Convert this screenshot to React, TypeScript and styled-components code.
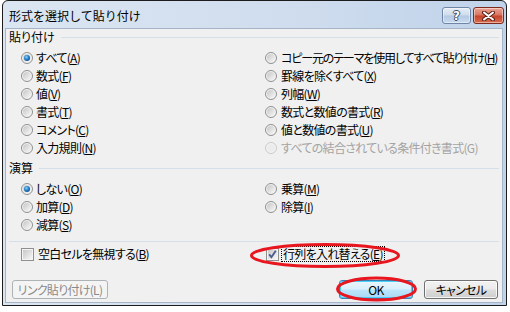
import React from "react";
import styled, { createGlobalStyle } from "styled-components";

const Global = createGlobalStyle`
  html, body { margin: 0; padding: 0; background: #ffffff; }
  body { font-family: "Noto Sans CJK JP", "Noto Sans", sans-serif; }
`;

const Desktop = styled.div`
  position: relative;
  width: 510px;
  height: 312px;
  overflow: hidden;
  background: #ffffff;
`;

const Window = styled.div`
  position: absolute;
  left: 2px;
  top: 0;
  width: 505px;
  height: 306px;
  box-sizing: border-box;
  border: 1px solid #1c1c1c;
  border-radius: 6px 6px 0 0;
  background: linear-gradient(to right, #dbe6f2 0%, #d0ddee 55%, #bfd3ea 100%);
  display: flex;
  flex-direction: column;
`;

const TitleBar = styled.div`
  height: 27px;
  display: flex;
  align-items: flex-start;
  padding: 0 2px 0 6px;
  flex-shrink: 0;
`;

const TitleText = styled.div`
  font-size: 12px;
  line-height: 16px;
  margin-top: 7px;
  color: #000;
  flex: 1;
`;

const CaptionGroup = styled.div`
  display: flex;
  gap: 2px;
  margin-top: 6px;
`;

const CaptionButton = styled.div<{ $kind: "help" | "close" }>`
  width: ${(p) => (p.$kind === "help" ? "29px" : "31px")};
  height: 17px;
  box-sizing: border-box;
  border-radius: 3px;
  display: flex;
  align-items: center;
  justify-content: center;
  border: 1px solid ${(p) => (p.$kind === "help" ? "#6f86a6" : "#7d2a1c")};
  box-shadow: inset 0 0 0 1px rgba(255, 255, 255, 0.45);
  background: ${(p) =>
    p.$kind === "help"
      ? "linear-gradient(#e6edf6 0%, #cfdcec 48%, #b4c9e2 52%, #c9dbef 100%)"
      : "linear-gradient(#eaa595 0%, #d9735f 48%, #c4432b 52%, #d86c4f 100%)"};
`;

const HelpGlyph = styled.span`
  font-family: "DejaVu Sans", sans-serif;
  font-weight: bold;
  font-size: 12px;
  line-height: 12px;
  color: #ffffff;
  text-shadow: 1px 0 0 #3b4d66, -1px 0 0 #3b4d66, 0 1px 0 #3b4d66, 0 -1px 0 #3b4d66;
`;

const Client = styled.div`
  flex: 1;
  margin: 0 3px 2px 2px;
  border: 1px solid #a5b4c6;
  background: #f0f0f0;
  display: flex;
  flex-direction: column;
  padding: 0 3px 0 3px;
  font-size: 12px;
  color: #000;
  font-feature-settings: "palt";
  letter-spacing: -0.7px;
`;

const SectionHeader = styled.div<{ $top: number }>`
  display: flex;
  align-items: center;
  height: 16px;
  margin-top: ${(p) => p.$top}px;
`;

const SectionLabel = styled.span`
  line-height: 16px;
  white-space: nowrap;
  letter-spacing: 0;
`;

const Rule = styled.div<{ $left?: number }>`
  flex: 1;
  height: 1px;
  background: #d5dfe8;
  margin-left: ${(p) => p.$left ?? 0}px;
`;

const Separator = styled.div`
  height: 1px;
  background: #d5dfe8;
  margin-top: 7px;
`;

const Columns = styled.div<{ $top: number }>`
  display: flex;
  padding-left: 12px;
  margin-top: ${(p) => p.$top}px;
`;

const Column = styled.div<{ $width?: number }>`
  display: flex;
  flex-direction: column;
  width: ${(p) => (p.$width ? `${p.$width}px` : "auto")};
  flex: ${(p) => (p.$width ? "none" : "1")};
`;

const OptionRow = styled.div<{ $gap?: number }>`
  display: flex;
  align-items: center;
  height: 18px;
  gap: ${(p) => p.$gap ?? 3}px;
  white-space: nowrap;
`;

const OptionText = styled.span<{ $disabled?: boolean; $tight?: boolean }>`
  line-height: 16px;
  color: ${(p) => (p.$disabled ? "#a3a3a3" : "#000")};
  letter-spacing: ${(p) => (p.$tight ? "-1.15px" : "inherit")};
`;

const Focus = styled.span`
  border: 1px dotted #000;
  padding: 0 1px;
  line-height: 14px;
`;

const Key = styled.u`
  text-decoration-thickness: 1px;
  text-underline-offset: 1px;
`;

const CheckRow = styled.div`
  display: flex;
  padding-left: 12px;
  margin-top: 3px;
`;

const ButtonRow = styled.div`
  display: flex;
  align-items: center;
  margin-top: 17px;
  padding: 0 1px 0 3px;
`;

const RightButtons = styled.div`
  margin-left: auto;
  display: flex;
  gap: 11px;
`;

const Button = styled.div<{ $variant?: "default" | "disabled"; $width: number }>`
  width: ${(p) => p.$width}px;
  height: 19px;
  box-sizing: border-box;
  border-radius: 3px;
  display: flex;
  align-items: center;
  justify-content: center;
  font-size: 12px;
  line-height: 14px;
  font-feature-settings: "palt";
  color: ${(p) => (p.$variant === "disabled" ? "#8a8a8a" : "#000")};
  border: 1px solid
    ${(p) =>
      p.$variant === "disabled" ? "#adb2b5" : p.$variant === "default" ? "#3c7fb1" : "#707070"};
  background: ${(p) =>
    p.$variant === "disabled"
      ? "#f4f4f4"
      : p.$variant === "default"
      ? "linear-gradient(#eaf6fd 0%, #d9f0fc 48%, #bee6fd 52%, #a7d9f5 100%)"
      : "linear-gradient(#f2f2f2 0%, #ebebeb 48%, #dddddd 52%, #cfcfcf 100%)"};
  box-shadow: ${(p) =>
    p.$variant === "default"
      ? "inset 0 0 0 1px #48d1fd"
      : p.$variant === "disabled"
      ? "none"
      : "inset 0 0 0 1px rgba(255,255,255,0.8)"};
`;

const Annotations = styled.svg`
  position: absolute;
  left: 0;
  top: 0;
  width: 510px;
  height: 312px;
  pointer-events: none;
`;

const GlyphBox = styled.svg`
  flex: none;
  display: block;
`;

function Radio({ checked, disabled }: { checked?: boolean; disabled?: boolean }) {
  return (
    <GlyphBox width="12" height="12" viewBox="0 0 12 12">
      <defs>
        <linearGradient id="rInner" x1="0" y1="0" x2="1" y2="1">
          <stop offset="0" stopColor="#c6c6c6" />
          <stop offset="1" stopColor="#f8f8f8" />
        </linearGradient>
        <radialGradient id="rDot" cx="0.4" cy="0.35" r="0.7">
          <stop offset="0" stopColor="#8fd3fa" />
          <stop offset="0.5" stopColor="#2b87cf" />
          <stop offset="1" stopColor="#0c4a86" />
        </radialGradient>
      </defs>
      <circle
        cx="6"
        cy="6"
        r="5.5"
        fill={disabled ? "#f4f4f4" : "#f2f2f2"}
        stroke={disabled ? "#c9c9c9" : "#8e8f8f"}
      />
      {!disabled && <circle cx="6" cy="6" r="4" fill="url(#rInner)" />}
      {disabled && <circle cx="6" cy="6" r="4" fill="#ececec" />}
      {checked && <circle cx="6" cy="6" r="3" fill="url(#rDot)" />}
    </GlyphBox>
  );
}

function Check({ checked }: { checked?: boolean }) {
  return (
    <GlyphBox width="13" height="13" viewBox="0 0 13 13">
      <defs>
        <linearGradient id="cInner" x1="0" y1="0" x2="1" y2="1">
          <stop offset="0" stopColor="#c8c8c8" />
          <stop offset="1" stopColor="#f6f6f6" />
        </linearGradient>
      </defs>
      <rect x="0.5" y="0.5" width="12" height="12" fill="#f4f4f4" stroke="#8e8f8f" />
      <rect x="2" y="2" width="9" height="9" fill="url(#cInner)" />
      {checked && (
        <path d="M3.2 6.4 L5.4 9.2 L9.8 2.8" fill="none" stroke="#4a5d8f" strokeWidth="1.9" />
      )}
    </GlyphBox>
  );
}

type Opt = {
  label: string;
  key?: string;
  suffix?: string;
  checked?: boolean;
  disabled?: boolean;
  tight?: boolean;
};

function Option({ o, gap }: { o: Opt; gap?: number }) {
  return (
    <OptionRow $gap={gap}>
      <Radio checked={o.checked} disabled={o.disabled} />
      <OptionText $disabled={o.disabled} $tight={o.tight}>
        {o.label}
        {o.key ? (
          <>
            (<Key>{o.key}</Key>)
          </>
        ) : (
          o.suffix
        )}
      </OptionText>
    </OptionRow>
  );
}

const pasteLeft: Opt[] = [
  { label: "すべて", key: "A", checked: true },
  { label: "数式", key: "F" },
  { label: "値", key: "V" },
  { label: "書式", key: "T" },
  { label: "コメント", key: "C" },
  { label: "入力規則", key: "N" },
];

const pasteRight: Opt[] = [
  { label: "コピー元のテーマを使用してすべて貼り付け", key: "H", tight: true },
  { label: "罫線を除くすべて", key: "X" },
  { label: "列幅", key: "W" },
  { label: "数式と数値の書式", key: "R" },
  { label: "値と数値の書式", key: "U" },
  { label: "すべての結合されている条件付き書式", suffix: "(G)", disabled: true },
];

const opLeft: Opt[] = [
  { label: "しない", key: "O", checked: true },
  { label: "加算", key: "D" },
  { label: "減算", key: "S" },
];

const opRight: Opt[] = [
  { label: "乗算", key: "M" },
  { label: "除算", key: "I" },
];

export default function App() {
  return (
    <Desktop>
      <Global />
      <Window>
        <TitleBar>
          <TitleText>形式を選択して貼り付け</TitleText>
          <CaptionGroup>
            <CaptionButton $kind="help">
              <HelpGlyph>?</HelpGlyph>
            </CaptionButton>
            <CaptionButton $kind="close">
              <svg width="13" height="10" viewBox="0 0 13 10">
                <path d="M2 1.5 L11 8.5 M11 1.5 L2 8.5" stroke="#5a2218" strokeWidth="4" strokeLinecap="round" />
                <path d="M2 1.5 L11 8.5 M11 1.5 L2 8.5" stroke="#ffffff" strokeWidth="2" strokeLinecap="round" />
              </svg>
            </CaptionButton>
          </CaptionGroup>
        </TitleBar>
        <Client>
          <SectionHeader $top={0}>
            <SectionLabel>貼り付け</SectionLabel>
            <Rule $left={6} />
          </SectionHeader>
          <Columns $top={4}>
            <Column $width={244}>
              {pasteLeft.map((o) => (
                <Option key={o.label} o={o} />
              ))}
            </Column>
            <Column>
              {pasteRight.map((o) => (
                <Option key={o.label} o={o} gap={4} />
              ))}
            </Column>
          </Columns>
          <SectionHeader $top={3}>
            <SectionLabel>演算</SectionLabel>
            <Rule $left={6} />
          </SectionHeader>
          <Columns $top={4}>
            <Column $width={244}>
              {opLeft.map((o) => (
                <Option key={o.label} o={o} />
              ))}
            </Column>
            <Column>
              {opRight.map((o) => (
                <Option key={o.label} o={o} gap={4} />
              ))}
            </Column>
          </Columns>
          <Separator />
          <CheckRow>
            <Column $width={245}>
              <OptionRow $gap={4}>
                <Check />
                <OptionText>
                  空白セルを無視する(<Key>B</Key>)
                </OptionText>
              </OptionRow>
            </Column>
            <Column>
              <OptionRow $gap={2}>
                <Check checked />
                <Focus>
                  行列を入れ替える(<Key>E</Key>)
                </Focus>
              </OptionRow>
            </Column>
          </CheckRow>
          <ButtonRow>
            <Button $variant="disabled" $width={96}>
              リンク貼り付け(L)
            </Button>
            <RightButtons>
              <Button $variant="default" $width={74}>
                OK
              </Button>
              <Button $width={74}>キャンセル</Button>
            </RightButtons>
          </ButtonRow>
        </Client>
      </Window>
      <Annotations viewBox="0 0 510 312">
        <ellipse cx="325" cy="255.5" rx="73.5" ry="11" fill="none" stroke="#e8161f" strokeWidth="3" />
        <ellipse cx="376.5" cy="289" rx="39" ry="11" fill="none" stroke="#e8161f" strokeWidth="3" />
      </Annotations>
    </Desktop>
  );
}
